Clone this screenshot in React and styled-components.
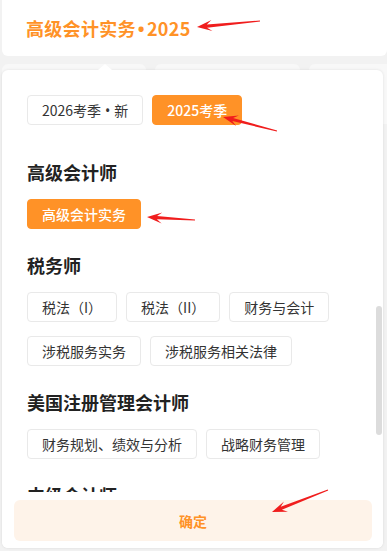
import React from "react";
import styled, { createGlobalStyle } from "styled-components";

const ORANGE = "#ff9227";

const GlobalStyle = createGlobalStyle`
  body {
    margin: 0;
    background: #f2f2f2;
    font-family: "Noto Sans CJK SC", "Noto Sans", sans-serif;
  }
`;

const Page = styled.div`
  position: relative;
  width: 387px;
  height: 551px;
  overflow: hidden;
  background: #f2f2f2;
`;

const Header = styled.div`
  height: 56px;
  margin-left: 2px;
  padding-left: 24px;
  background: #fff;
  border-radius: 0 0 6px 6px;
  display: flex;
  align-items: center;
`;

const Title = styled.div`
  font-size: 18px;
  font-weight: 700;
  color: ${ORANGE};
  letter-spacing: 0.3px;
`;

const Dot = styled.span`
  font-family: "Noto Sans", "DejaVu Sans", sans-serif;
  margin: 0 ${(p) => p.$gap || 1}px;
`;

const CardRow = styled.div`
  display: flex;
  gap: 9px;
  padding: 8px 0 0 2px;
`;

const BackCard = styled.div`
  flex: 0 0 ${(p) => p.$w}px;
  height: 60px;
  background: #f8f8f8;
  border-radius: 6px;
`;

const Popup = styled.div`
  position: absolute;
  top: 70px;
  left: 2px;
  width: 381px;
  height: 478px;
  background: #fff;
  border-radius: 6px;
  box-shadow: 0 0 3px rgba(0, 0, 0, 0.1);
  display: flex;
  flex-direction: column;

  &::before {
    content: "";
    position: absolute;
    top: -6px;
    left: 96px;
    border-left: 7px solid transparent;
    border-right: 7px solid transparent;
    border-bottom: 6px solid #fff;
  }
`;

const Scroll = styled.div`
  position: relative;
  height: 422px;
  overflow: hidden;
  padding: 25px 24px 0 25px;
`;

const ScrollBar = styled.div`
  position: absolute;
  right: 1px;
  top: 236px;
  width: 6px;
  height: 129px;
  border-radius: 3px;
  background: #dcdcdc;
`;

const ChipRow = styled.div`
  display: flex;
  flex-wrap: wrap;
  gap: 14px 9px;
`;

const Chip = styled.div`
  height: 30px;
  padding: 0 14px;
  box-sizing: border-box;
  display: flex;
  align-items: center;
  border-radius: 4px;
  font-size: 14px;
  border: 1px solid ${(p) => (p.$active ? ORANGE : "#e9e9e9")};
  background: ${(p) => (p.$active ? ORANGE : "#fff")};
  color: ${(p) => (p.$active ? "#fff" : "#333")};
  font-weight: ${(p) => (p.$active ? 500 : 400)};
`;

const Section = styled.div`
  margin-top: ${(p) => (p.$first ? 35 : 24)}px;
`;

const Heading = styled.div`
  font-size: 18px;
  line-height: 24px;
  font-weight: 700;
  color: #222;
  margin-bottom: 15px;
`;

const Footer = styled.div`
  padding: 8px 11px 7px 12px;
  background: #fff;
  border-radius: 0 0 6px 6px;
`;

const Confirm = styled.div`
  height: 41px;
  border-radius: 6px;
  background: #fef3e9;
  color: ${ORANGE};
  font-size: 14px;
  font-weight: 700;
  display: flex;
  align-items: center;
  justify-content: center;
`;

const Overlay = styled.svg`
  position: absolute;
  left: 0;
  top: 0;
  pointer-events: none;
`;

const groups = [
  { title: "高级会计师", items: [{ name: "高级会计实务", active: true }] },
  {
    title: "税务师",
    items: [
      { name: "税法（I）" },
      { name: "税法（II）" },
      { name: "财务与会计" },
      { name: "涉税服务实务" },
      { name: "涉税服务相关法律" },
    ],
  },
  {
    title: "美国注册管理会计师",
    items: [{ name: "财务规划、绩效与分析" }, { name: "战略财务管理" }],
  },
  { title: "中级会计师", items: [{ name: "中级会计实务" }] },
];

function Arrow({ tail, head }) {
  const dx = head[0] - tail[0];
  const dy = head[1] - tail[1];
  const len = Math.hypot(dx, dy);
  const u = [dx / len, dy / len];
  const n = [-u[1], u[0]];
  const at = (base, along, side) => [
    base[0] + u[0] * along + n[0] * side,
    base[1] + u[1] * along + n[1] * side,
  ];
  const pts = [
    at(tail, 0, 0.5),
    at(head, -10, 1.6),
    at(head, -15, 5.5),
    head,
    at(head, -15, -5.5),
    at(head, -10, -1.6),
    at(tail, 0, -0.5),
  ];
  return <polygon points={pts.map((p) => p.join(",")).join(" ")} fill="#f01d1d" />;
}

export default function App() {
  return (
    <Page>
      <GlobalStyle />
      <Header>
        <Title>
          高级会计实务<Dot $gap={2}>•</Dot>2025
        </Title>
      </Header>
      <CardRow>
        <BackCard $w={144} />
        <BackCard $w={145} />
        <BackCard $w={90} />
      </CardRow>

      <Popup>
        <Scroll>
          <ChipRow>
            <Chip>
              2026考季<Dot $gap={4}>•</Dot>新
            </Chip>
            <Chip $active>2025考季</Chip>
          </ChipRow>
          {groups.map((g, i) => (
            <Section key={g.title} $first={i === 0}>
              <Heading>{g.title}</Heading>
              <ChipRow>
                {g.items.map((it) => (
                  <Chip key={it.name} $active={it.active}>{it.name}</Chip>
                ))}
              </ChipRow>
            </Section>
          ))}
          <ScrollBar />
        </Scroll>
        <Footer>
          <Confirm>确定</Confirm>
        </Footer>
      </Popup>

      <Overlay width="387" height="551">
        <Arrow tail={[260, 21]} head={[197, 27]} />
        <Arrow tail={[277, 131]} head={[223, 117]} />
        <Arrow tail={[195, 220]} head={[147, 217]} />
        <Arrow tail={[328, 490]} head={[272, 512]} />
      </Overlay>
    </Page>
  );
}
